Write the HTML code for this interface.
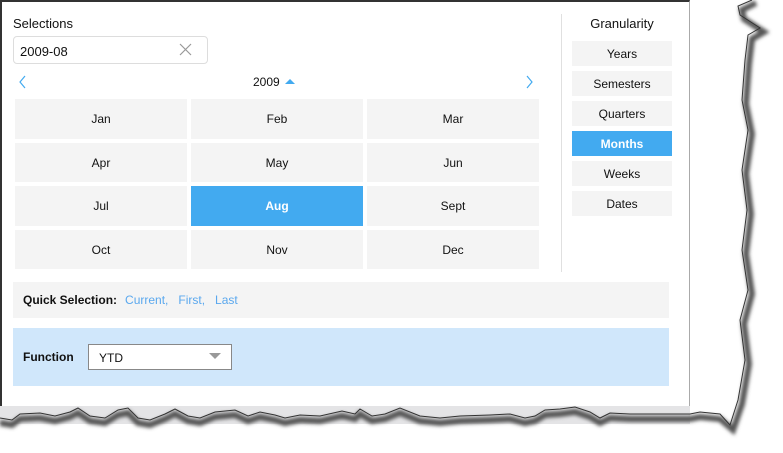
<!DOCTYPE html>
<html><head><style>
*{margin:0;padding:0;box-sizing:border-box}
body{width:783px;height:453px;background:#fff;position:relative;overflow:hidden;font-family:"Liberation Sans",sans-serif;font-size:12px;color:#111}
.a{position:absolute}
.c{position:absolute;background:#f4f4f4;display:flex;align-items:center;justify-content:center;font-size:12px;font-weight:500}
.g{position:absolute;left:572px;width:100px;height:25px;background:#f4f4f4;display:flex;align-items:center;justify-content:center;font-size:12px}
.c.sel,.g.sel{background:#42aaf0;color:#fff;font-weight:bold}
</style></head><body>
<div class="a" style="left:0;top:0;width:690px;height:406px;border-top:2px solid #333;border-left:2px solid #333;border-right:1px solid #aaa;background:#fff"></div>
<div class="a" style="left:0;top:406px;width:690px;height:18px;background:#e4e4e6"></div>
<svg class="a" style="left:0;top:0" width="783" height="453">
<defs><filter id="b"><feGaussianBlur stdDeviation="1.8"/></filter></defs>
<polyline fill="none" stroke="#555" stroke-width="6" filter="url(#b)" points="0,423 12,425 20,419 40,418 55,421 70,417 78,413 90,421 105,423 118,415 128,413 138,423 150,425 165,419 175,414 188,421 200,423 215,417 235,415 248,421 260,417 275,420 285,423 300,420 320,421 342,416 355,419 360,414 372,421 385,419 400,413 420,421 440,423 460,421 490,420 510,419 525,423 535,421 545,415 560,414 575,412 590,417 600,423 610,418 630,419 650,419 670,419 690,419 700,417 720,419 733,430 742,404 749,364 744,324 752,294 746,254 751,214 746,174 752,134 746,104 749,64 752,39 764,32 744,19 742,10 756,3"/>
<polygon fill="#fff" points="0,453 0,418 12,420 20,414 40,413 55,416 70,412 78,408 90,416 105,418 118,410 128,408 138,418 150,420 165,414 175,409 188,416 200,418 215,412 235,410 248,416 260,412 275,415 285,418 300,415 320,416 342,411 355,414 360,409 372,416 385,414 400,408 420,416 440,418 460,416 490,415 510,414 525,418 535,416 545,410 560,409 575,407 590,412 600,418 610,413 630,414 650,414 670,414 690,414 700,412 720,414 730,425 738,400 745,360 740,320 748,290 742,250 747,210 742,170 748,130 742,100 745,60 748,35 760,28 740,15 738,6 752,0 783,0 783,453" transform="translate(0,0)" opacity="0"/>
<polyline fill="none" stroke="#333" stroke-width="1" points="0,418 12,420 20,414 40,413 55,416 70,412 78,408 90,416 105,418 118,410 128,408 138,418 150,420 165,414 175,409 188,416 200,418 215,412 235,410 248,416 260,412 275,415 285,418 300,415 320,416 342,411 355,414 360,409 372,416 385,414 400,408 420,416 440,418 460,416 490,415 510,414 525,418 535,416 545,410 560,409 575,407 590,412 600,418 610,413 630,414 650,414 670,414 690,414 700,412 720,414 730,425 738,400 745,360 740,320 748,290 742,250 747,210 742,170 748,130 742,100 745,60 748,35 760,28 740,15 738,6 752,0"/>
</svg>
<div class="a" style="left:13px;top:16px;font-size:13px">Selections</div>
<div class="a" style="left:13px;top:36px;width:195px;height:28px;border:1px solid #ddd;border-radius:4px;font-size:13px;padding:7px 0 0 6px">2009-08</div>
<svg class="a" style="left:179px;top:43px" width="13" height="13"><path d="M1 1L12 12M12 1L1 12" stroke="#999" stroke-width="1.2"/></svg>
<svg class="a" style="left:19px;top:75px" width="8" height="14"><path d="M6 1L1 7L6 13" fill="none" stroke="#42aaf0" stroke-width="1.2"/></svg>
<svg class="a" style="left:526px;top:75px" width="8" height="14"><path d="M1 1L6 7L1 13" fill="none" stroke="#42aaf0" stroke-width="1.2"/></svg>
<div class="a" style="left:253px;top:75px;font-size:12px">2009</div>
<svg class="a" style="left:284px;top:77px" width="12" height="8"><path d="M1 7L6 2L11 7Z" fill="#42aaf0"/></svg>
<div class="c" style="left:15px;top:99px;width:172px;height:40px">Jan</div>
<div class="c" style="left:191px;top:99px;width:172px;height:40px">Feb</div>
<div class="c" style="left:367px;top:99px;width:172px;height:40px">Mar</div>
<div class="c" style="left:15px;top:143px;width:172px;height:39px">Apr</div>
<div class="c" style="left:191px;top:143px;width:172px;height:39px">May</div>
<div class="c" style="left:367px;top:143px;width:172px;height:39px">Jun</div>
<div class="c" style="left:15px;top:186px;width:172px;height:40px">Jul</div>
<div class="c sel" style="left:191px;top:186px;width:172px;height:40px">Aug</div>
<div class="c" style="left:367px;top:186px;width:172px;height:40px">Sept</div>
<div class="c" style="left:15px;top:230px;width:172px;height:39px">Oct</div>
<div class="c" style="left:191px;top:230px;width:172px;height:39px">Nov</div>
<div class="c" style="left:367px;top:230px;width:172px;height:39px">Dec</div>
<div class="a" style="left:561px;top:14px;width:1px;height:258px;background:#e0e0e0"></div>
<div class="a" style="left:572px;top:16px;width:100px;text-align:center;font-size:13px">Granularity</div>
<div class="g" style="top:41px">Years</div>
<div class="g" style="top:71px">Semesters</div>
<div class="g" style="top:101px">Quarters</div>
<div class="g sel" style="top:131px">Months</div>
<div class="g" style="top:161px">Weeks</div>
<div class="g" style="top:191px">Dates</div>
<div class="a" style="left:13px;top:282px;width:656px;height:36px;background:#f4f4f4;padding:11px 0 0 10px;font-size:12px"><b>Quick Selection:</b><span style="color:#5aa8ee;margin-left:8px">Current,&nbsp;&nbsp; First,&nbsp;&nbsp; Last</span></div>
<div class="a" style="left:13px;top:328px;width:656px;height:58px;background:#d0e7fb"></div>
<div class="a" style="left:23px;top:350px;font-weight:bold">Function</div>
<div class="a" style="left:88px;top:344px;width:144px;height:26px;border:1px solid #888;background:#fff;padding:6px 0 0 10px">YTD</div>
<svg class="a" style="left:209px;top:353px" width="12" height="7"><path d="M0 0L12 0L6 6Z" fill="#999"/></svg>
</body></html>
